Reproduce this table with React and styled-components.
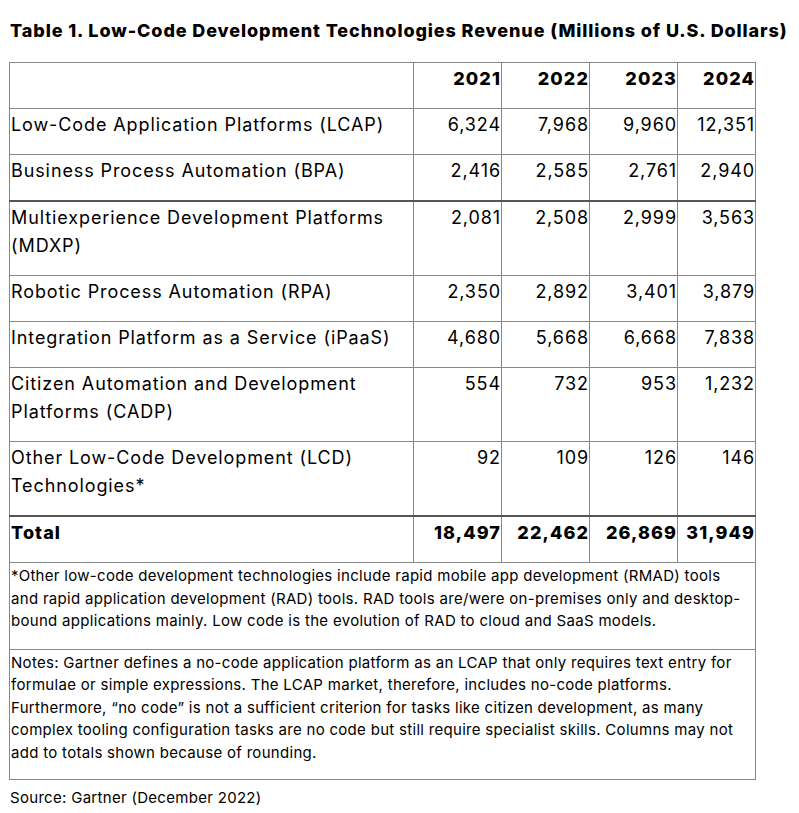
import React from 'react'
import styled, { createGlobalStyle } from 'styled-components'

const GlobalStyle = createGlobalStyle`
    body {
        margin: 0;
        background: #ffffff;
        font-family: Inter, "Open Sans", sans-serif;
        color: #000000;
    }
`

const Page = styled.div`
    padding: 18px 9px 0 9px;
`

const Title = styled.h1`
    margin: 0 0 18px 1px;
    font-size: 18px;
    line-height: 26px;
    font-weight: 800;
    letter-spacing: 0.9px;
    white-space: nowrap;
`

const Table = styled.table`
    width: 746px;
    border-collapse: collapse;
    table-layout: fixed;
    border: 1px solid #888888;
`

const Row = styled.tr`
    border-top: ${props => (props.heavy ? '2px solid #555555' : '1px solid #888888')};
`

const Cell = styled.td`
    border-left: 1px solid #888888;
    border-right: 1px solid #888888;
    padding: 2px 0 15px 1px;
    vertical-align: top;
    font-size: 18px;
    line-height: 28px;
    letter-spacing: ${props => (props.bold ? '1.1px' : '0.9px')};
    font-weight: ${props => (props.bold ? 800 : 400)};
    text-align: ${props => (props.num ? 'right' : 'left')};
`

const NoteCell = styled.td`
    border: 1px solid #888888;
    padding: 2px 1px ${props => (props.tight ? '15px' : '16px')} 1px;
    font-size: 15px;
    line-height: 22.5px;
    letter-spacing: 0.3px;
    vertical-align: top;
`

const Line = styled.span`
    display: block;
    white-space: nowrap;
`

const Source = styled.p`
    margin: 7px 0 0 1px;
    font-size: 15px;
    line-height: 22px;
    letter-spacing: 0.3px;
`

const years = ['2021', '2022', '2023', '2024']

const rows = [
    { label: 'Low-Code Application Platforms (LCAP)', values: ['6,324', '7,968', '9,960', '12,351'] },
    { label: 'Business Process Automation (BPA)', values: ['2,416', '2,585', '2,761', '2,940'] },
    { label: 'Multiexperience Development Platforms (MDXP)', values: ['2,081', '2,508', '2,999', '3,563'], heavy: true },
    { label: 'Robotic Process Automation (RPA)', values: ['2,350', '2,892', '3,401', '3,879'] },
    { label: 'Integration Platform as a Service (iPaaS)', values: ['4,680', '5,668', '6,668', '7,838'] },
    { label: 'Citizen Automation and Development Platforms (CADP)', values: ['554', '732', '953', '1,232'] },
    { label: 'Other Low-Code Development (LCD) Technologies*', values: ['92', '109', '126', '146'] }
]

const totals = ['18,497', '22,462', '26,869', '31,949']

const footnote = [
    '*Other low-code development technologies include rapid mobile app development (RMAD) tools',
    'and rapid application development (RAD) tools. RAD tools are/were on-premises only and desktop-',
    'bound applications mainly. Low code is the evolution of RAD to cloud and SaaS models.'
]

const notes = [
    'Notes: Gartner defines a no-code application platform as an LCAP that only requires text entry for',
    'formulae or simple expressions. The LCAP market, therefore, includes no-code platforms.',
    'Furthermore, “no code” is not a sufficient criterion for tasks like citizen development, as many',
    'complex tooling configuration tasks are no code but still require specialist skills. Columns may not',
    'add to totals shown because of rounding.'
]

export default function App() {
    return (
        <Page>
            <GlobalStyle />
            <Title>Table 1. Low-Code Development Technologies Revenue (Millions of U.S. Dollars)</Title>
            <Table>
                <colgroup>
                    <col style={{ width: 404 }} />
                    <col style={{ width: 88 }} />
                    <col style={{ width: 88 }} />
                    <col style={{ width: 88 }} />
                    <col style={{ width: 78 }} />
                </colgroup>
                <tbody>
                    <Row>
                        <Cell />
                        {years.map(y => <Cell key={y} num bold>{y}</Cell>)}
                    </Row>
                    {rows.map(r => (
                        <Row key={r.label} heavy={r.heavy}>
                            <Cell>{r.label}</Cell>
                            {r.values.map((v, i) => <Cell key={i} num>{v}</Cell>)}
                        </Row>
                    ))}
                    <Row heavy>
                        <Cell bold>Total</Cell>
                        {totals.map(t => <Cell key={t} num bold>{t}</Cell>)}
                    </Row>
                    <tr>
                        <NoteCell colSpan={5}>
                            {footnote.map(l => <Line key={l}>{l}</Line>)}
                        </NoteCell>
                    </tr>
                    <tr>
                        <NoteCell colSpan={5} tight>
                            {notes.map(l => <Line key={l}>{l}</Line>)}
                        </NoteCell>
                    </tr>
                </tbody>
            </Table>
            <Source>Source: Gartner (December 2022)</Source>
        </Page>
    )
}
